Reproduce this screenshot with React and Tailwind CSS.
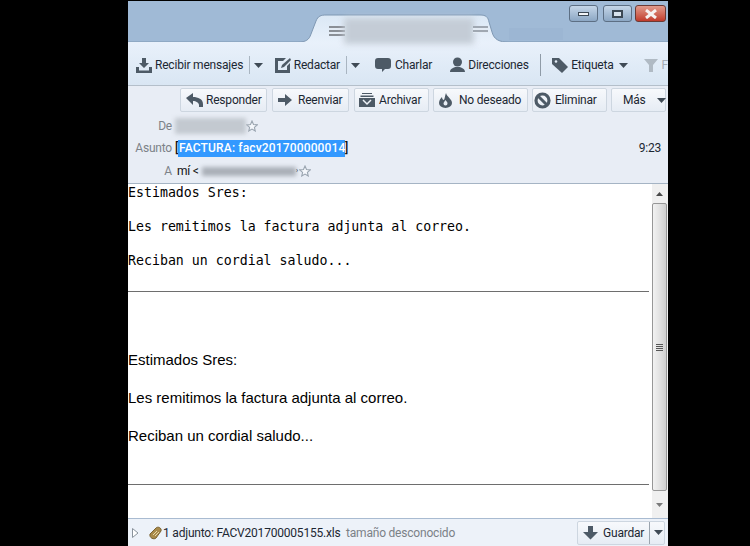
const ui = { fontFamily: 'Roboto,"Noto Sans",sans-serif' };

function Caret({ className = "" }) {
  return (
    <svg width="9" height="5" viewBox="0 0 9 5" className={`shrink-0 ${className}`}>
      <path d="M0 0h9L4.500 5z" fill="#3f4a55" />
    </svg>
  );
}

function Icon({ children, w = 18, h = 16 }) {
  return (
    <svg width={w} height={h} viewBox={`0 0 ${w} ${h}`} className="shrink-0">
      {children}
    </svg>
  );
}

const G = "#4d5a66";

function Btn({ icon, children, className = "" }) {
  return (
    <div className={`h-[24px] flex items-center rounded-[2px] border border-[#cdd6e0] bg-gradient-to-b from-[#f7f9fc] to-[#e6ecf4] text-[#1c2732] ${className}`}>
      {icon}
      <span>{children}</span>
    </div>
  );
}

function Star() {
  return (
    <svg width="12" height="12" viewBox="0 0 24 24" className="shrink-0">
      <path d="M12 2l3 7 7.500.7-5.700 5 1.700 7.300L12 18.200 5.500 22l1.700-7.300-5.700-5L9 9z" fill="#f4f7fb" stroke="#9aa5b0" strokeWidth="2.200" />
    </svg>
  );
}

export default function App() {
  return (
    <div className="w-[750px] h-[546px] bg-black pl-[128px] pt-px overflow-hidden text-[12px] tracking-[-0.2px]" style={ui}>
      <div className="w-[540px] h-[545px] flex flex-col overflow-hidden">
        {/* Title bar with tab */}
        <div className="relative h-[41px] shrink-0 bg-[#a0bad6]">
          <svg width="540" height="41" viewBox="0 0 540 41" className="absolute left-0 top-0">
            <defs>
              <linearGradient id="t" x1="0" y1="0" x2="0" y2="1">
                <stop offset="0" stopColor="#dbe8f5" />
                <stop offset="1" stopColor="#e9f1fb" />
              </linearGradient>
            </defs>
            <path d="M0 41H170C178 41 181 39 183 33L188 20C190 15 193 14 198 14H352C358 14 360 16 361 21L364 31C366 39 372 41 380 41H540V42H0z" fill="url(#t)" />
            <path d="M0 41H170C178 41 181 39 183 33L188 20C190 15 193 14 198 14H352C358 14 360 16 361 21L364 31C366 39 372 41 380 41H540" fill="none" stroke="#7f98b3" strokeWidth="1" />
          </svg>
          <div className="absolute left-[201px] top-[25px] w-[16px] h-[10px] bg-[repeating-linear-gradient(#8a8f96_0_2px,#e3ebf4_2px_4px)]" />
          <div className="absolute left-[216px] top-[17px] w-[130px] h-[26px] bg-[#c4ccd6] blur-[3px]" />
          <div className="absolute left-[345px] top-[25px] w-[15px] h-[7px] bg-[repeating-linear-gradient(#a0a8b2_0_2px,#e3ebf4_2px_4px)]" />
          <div className="absolute left-[381px] top-[27px] w-[54px] h-[12px] bg-[#9cb6d3]" />
          <div className="absolute left-[441px] top-[4px] flex">
            <div className="w-[29px] h-[17px] rounded-[3px] border border-[#5d6f84] bg-gradient-to-b from-[#c5d6e8] to-[#8ca7c4] flex items-center justify-center">
              <div className="w-[11px] h-[4px] bg-[#f2f5f8] border border-[#3c4854]" />
            </div>
            <div className="ml-[5px] w-[29px] h-[17px] rounded-[3px] border border-[#5d6f84] bg-gradient-to-b from-[#c5d6e8] to-[#8ca7c4] flex items-center justify-center">
              <div className="w-[11px] h-[8px] bg-[#d8e2ec] border-2 border-[#3c4854]" />
            </div>
            <div className="ml-[3px] w-[31px] h-[17px] rounded-[3px] border border-[#6b3a35] bg-gradient-to-b from-[#e09a8c] to-[#c0392b] flex items-center justify-center">
              <svg width="14" height="10" viewBox="0 0 14 10">
                <path d="M2 1l10 8M12 1L2 9" stroke="#f6f2f1" strokeWidth="3" />
              </svg>
            </div>
          </div>
        </div>

        {/* Main toolbar */}
        <div className="h-[44px] shrink-0 flex items-center pl-[8px] pt-[3px] bg-gradient-to-b from-[#e9f1fb] to-[#d9e6f3] border-b border-[#b4bfca] text-[#1c2732] overflow-hidden whitespace-nowrap">
          <Icon w={16} h={16}>
            <path d="M6 1h4v5h3L8 11 3 6h3z" fill={G} />
            <path d="M0 10h3v3.500h10V10h3v6H0z" fill={G} />
          </Icon>
          <span className="ml-[3px] w-[95px]">Recibir mensajes</span>
          <div className="w-px h-[18px] bg-[#a9b5c1]" />
          <Caret className="ml-[4px]" />
          <div className="ml-[12px]">
            <Icon w={16} h={16}>
              <path d="M0 1h11L8 4H3v9h9V9l3-3v10H0z" fill={G} />
              <path d="M6 11l1-3 8-7 1 2-7 7z" fill={G} />
            </Icon>
          </div>
          <span className="ml-[3px] w-[53px]">Redactar</span>
          <div className="w-px h-[18px] bg-[#a9b5c1]" />
          <Caret className="ml-[4px]" />
          <div className="ml-[15px]">
            <Icon w={16} h={16}>
              <path d="M3 1h10a3 3 0 0 1 3 3v5a3 3 0 0 1-3 3h-3l-3 3v-3H3a3 3 0 0 1-3-3V4a3 3 0 0 1 3-3z" fill={G} />
            </Icon>
          </div>
          <span className="ml-[4px] w-[56px]">Charlar</span>
          <Icon w={15} h={16}>
            <circle cx="7.500" cy="5" r="4.500" fill={G} />
            <path d="M0 15c0-3 3-4 5-5h5c2 1 5 2 5 5z" fill={G} />
          </Icon>
          <span className="ml-[3px] w-[73px]">Direcciones</span>
          <div className="w-px h-[22px] bg-[#8f9ba7]" />
          <div className="ml-[11px]">
            <Icon w={16} h={16}>
              <path d="M0 1h7l9 9-6 6-10-9z" fill={G} />
              <circle cx="4" cy="4.500" r="1.300" fill="#e4edf7" />
            </Icon>
          </div>
          <span className="ml-[3px] w-[48px]">Etiqueta</span>
          <Caret />
          <div className="ml-[16px]">
            <Icon w={14} h={14}>
              <path d="M0 1h14L9 7v7H5V7z" fill="#b0bac4" />
            </Icon>
          </div>
          <span className="ml-[4px] text-[#a5adb5]">F</span>
        </div>

        {/* Header pane */}
        <div className="h-[98px] shrink-0 bg-[#e8edf5] border-b border-[#a5b4c4] text-[#1c2732] whitespace-nowrap">
          <div className="flex justify-end gap-[4px] pr-[2px] pt-[2px]">
            <Btn className="w-[87px] pl-[5px] gap-[3px]" icon={
              <Icon w={17} h={16}>
                <path d="M7 1v4c5 0 10 2 10 7v3h-4v-2c0-2-3-4-6-4v4L0 6z" fill={G} />
              </Icon>
            }>Responder</Btn>
            <Btn className="ml-px w-[77px] pl-[5px] gap-[5px]" icon={
              <Icon w={15} h={14}>
                <path d="M0 5h7V1l7 6-7 6V9H0z" fill={G} />
              </Icon>
            }>Reenviar</Btn>
            <Btn className="ml-px w-[75px] pl-[4px] gap-[4px]" icon={
              <Icon w={16} h={16}>
                <path d="M3 1h10v1H3zM1.500 3.500h13V5h-13zM0 6h16v9H0z" fill={G} />
                <path d="M4 8l4 4 4-4" fill="none" stroke="#eef2f7" strokeWidth="1.500" />
              </Icon>
            }>Archivar</Btn>
            <Btn className="w-[95px] pl-[5px] gap-[7px]" icon={
              <Icon w={13} h={16}>
                <path d="M7 1C8 5 13 7 13 11a6.500 5 0 0 1-13 0C0 8 2 6 3 5c0 2 1 3 2 3 1-2 1-5 2-7z" fill={G} />
                <path d="M6.500 8c1 1.500 2 2 2 3.500a2 2 0 0 1-4 0c0-1 1-2 2-3.500z" fill="#e9eef5" />
              </Icon>
            }>No deseado</Btn>
            <Btn className="w-[75px] pl-[1px] gap-[4px]" icon={
              <Icon w={17} h={17}>
                <circle cx="8.500" cy="8.500" r="6.500" fill="none" stroke={G} strokeWidth="3.200" />
                <path d="M4 4l9 9" stroke={G} strokeWidth="3" />
              </Icon>
            }>Eliminar</Btn>
            <Btn className="w-[55px] pl-[11px]" icon={null}>
              <span className="inline-flex items-center gap-[11px]">Más<Caret /></span>
            </Btn>
          </div>
          <div className="flex items-center h-[20px] mt-[4px]">
            <span className="w-[44px] text-right text-[#7c8288]">De</span>
            <div className="ml-[3px] w-[71px] h-[16px] bg-[#c3c9d0] blur-[2px]" />
            <Star />
          </div>
          <div className="flex items-center h-[20px] mt-[2px]">
            <span className="w-[44px] text-right text-[#7c8288]">Asunto</span>
            <span className="ml-[3px] font-medium text-[#111]">[</span>
            <span className="bg-[#3399ff] text-white font-medium leading-[17px] px-px w-[167px] tracking-[0.15px]">FACTURA: facv201700000014</span>
            <span className="font-medium text-[#111]">]</span>
            <span className="ml-auto mr-[7px] text-[#1c2732]">9:23</span>
          </div>
          <div className="flex items-center h-[20px] mt-[3px]">
            <span className="w-[44px] text-right text-[#7c8288]">A</span>
            <span className="ml-[5px] text-[#111]">mí &lt;</span>
            <div className="ml-[3px] w-[94px] h-[9px] bg-[#a9afb7] blur-[2px]" />
            <span className="mr-[1px] text-[#111] text-[8px]">›</span>
            <Star />
          </div>
        </div>

        {/* Body */}
        <div className="flex-1 min-h-0 flex bg-white tracking-normal">
          <div className="flex-1 min-w-0 text-black pr-[3px]">
            <div className="text-[13.250px] leading-[17px]" style={{ fontFamily: '"DejaVu Sans Mono",monospace' }}>
              <p>Estimados Sres:</p>
              <p className="mt-[17px]">Les remitimos la factura adjunta al correo.</p>
              <p className="mt-[17px]">Reciban un cordial saludo...</p>
            </div>
            <hr className="mt-[22px] border-0 h-px bg-[#6e6e6e]" />
            <div className="mt-[59px] text-[15px] leading-[17px]" style={{ fontFamily: '"Liberation Sans",Arial,sans-serif' }}>
              <p>Estimados Sres:</p>
              <p className="mt-[21px]">Les remitimos la factura adjunta al correo.</p>
              <p className="mt-[21px]">Reciban un cordial saludo...</p>
            </div>
            <hr className="mt-[40px] border-0 h-px bg-[#6e6e6e]" />
          </div>
          <div className="w-[16px] shrink-0 bg-[#f0f0f0] flex flex-col items-start">
            <div className="w-[15px] h-[19px] flex items-center justify-center">
              <svg width="7" height="4" viewBox="0 0 7 4"><path d="M3.500 0L7 4H0z" fill="#4a4a4a" /></svg>
            </div>
            <div className="w-[15px] h-[288px] border border-[#979797] rounded-[2px] bg-gradient-to-r from-[#f2f2f2] via-[#e2e2e2] to-[#cfcfcf] flex flex-col items-center justify-center gap-px">
              <div className="w-[7px] h-px bg-[#555]" />
              <div className="w-[7px] h-px bg-[#555]" />
              <div className="w-[7px] h-px bg-[#555]" />
              <div className="w-[7px] h-px bg-[#555]" />
            </div>
            <div className="w-[15px] flex-1 flex items-center justify-center">
              <svg width="7" height="4" viewBox="0 0 7 4"><path d="M0 0h7L3.500 4z" fill="#7a7a7a" /></svg>
            </div>
          </div>
        </div>

        {/* Attachments */}
        <div className="h-[28px] shrink-0 border-t border-[#a9bbd1] bg-[#edf2f9] flex items-center text-[#1c2732] whitespace-nowrap">
          <svg width="7" height="10" viewBox="0 0 7 10" className="ml-[4px]">
            <path d="M.5.500L6 5 .5 9.500z" fill="#fff" stroke="#8a939c" />
          </svg>
          <svg width="13" height="14" viewBox="0 0 13 14" className="ml-[10px]">
            <path d="M1 8l6-6c2-2 6 0 5 3l-5 7c-2 2-7 0-6-4z" fill="#a98a4a" stroke="#7a6230" />
            <path d="M4 9l4-4M6 10l4-4" stroke="#e8d8a8" strokeWidth="1" />
          </svg>
          <span className="ml-px w-[183px]">1 adjunto: FACV201700005155.xls</span>
          <span className="text-[#7b8187]">tamaño desconocido</span>
          <div className="ml-auto mr-[3px] w-[88px] h-[24px] flex items-center rounded-[2px] border border-[#cdd6e0] bg-gradient-to-b from-[#f7f9fc] to-[#e6ecf4]">
            <div className="ml-[5px]">
              <Icon w={15} h={15}>
                <path d="M5 1h5v6h5l-7.500 7.500L0 7h5z" fill={G} />
              </Icon>
            </div>
            <span className="ml-[5px] w-[46px]">Guardar</span>
            <div className="w-px h-[22px] bg-[#9aa4ae]" />
            <Caret className="ml-[4px]" />
          </div>
        </div>
      </div>
    </div>
  );
}
